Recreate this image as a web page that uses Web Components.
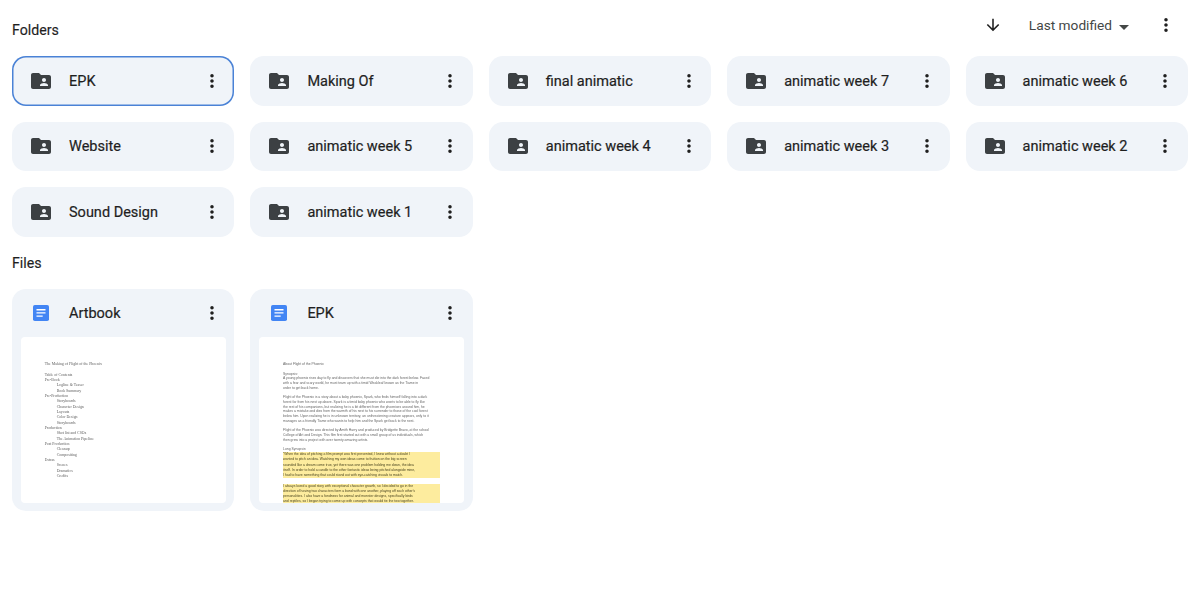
<!DOCTYPE html>
<html>
<head>
<meta charset="utf-8">
<title>Drive folder</title>
<style>
  html, body { margin: 0; background: #fff; }
  body { font-family: Roboto, "Liberation Sans", sans-serif; }
</style>
</head>
<body>
<drive-page>
  <drive-head slot="head"></drive-head>
  <drive-grid slot="folders">
    <folder-card selected>EPK</folder-card>
    <folder-card>Making Of</folder-card>
    <folder-card>final animatic</folder-card>
    <folder-card>animatic week 7</folder-card>
    <folder-card>animatic week 6</folder-card>
    <folder-card>Website</folder-card>
    <folder-card>animatic week 5</folder-card>
    <folder-card>animatic week 4</folder-card>
    <folder-card>animatic week 3</folder-card>
    <folder-card>animatic week 2</folder-card>
    <folder-card>Sound Design</folder-card>
    <folder-card>animatic week 1</folder-card>
  </drive-grid>
  <drive-grid slot="files">
    <file-card name="Artbook"><artbook-preview></artbook-preview></file-card>
    <file-card name="EPK"><epk-preview></epk-preview></file-card>
  </drive-grid>
</drive-page>

<script>
"use strict";

var KEBAB = `<svg width="24" height="24" viewBox="0 0 24 24" fill="#1f1f1f"><path d="M12 8c1.1 0 2-.9 2-2s-.9-2-2-2-2 .9-2 2 .9 2 2 2zm0 2c-1.1 0-2 .9-2 2s.9 2 2 2 2-.9 2-2-.9-2-2-2zm0 6c-1.1 0-2 .9-2 2s.9 2 2 2 2-.9 2-2-.9-2-2-2z" transform="translate(12 12) scale(.86) translate(-12 -12)"/></svg>`;

//Roboto 500 reads too heavy next to the reference, so 400 with a hair of stroke
var CARD_TEXT = `font-size : 14.5px; font-weight : 400; -webkit-text-stroke : .2px #1f1f1f; color : #1f1f1f;`;

class DrivePage extends HTMLElement{
    constructor(){
        super();
        this.attachShadow({ mode : "open" });
        this.shadowRoot.innerHTML = `
            <style>
                :host{ display : block; padding : 0 12px; width : 1176px; height : 598px; color : #1f1f1f; }
                #filesLabel{ font-size : 14.2px; font-weight : 400; -webkit-text-stroke : .15px #1f1f1f; line-height : 20px; padding : 16px 0 16px; }
            </style>
            <slot name="head"></slot>
            <slot name="folders"></slot>
            <div id="filesLabel">Files</div>
            <slot name="files"></slot>
        `;
    }
}

class DriveHead extends HTMLElement{
    constructor(){
        super();
        this.attachShadow({ mode : "open" });
        this.shadowRoot.innerHTML = `
            <style>
                :host{ display : flex; height : 56px; justify-content : space-between; color : #1f1f1f; }
                #label{ font-size : 14.2px; font-weight : 400; -webkit-text-stroke : .15px #1f1f1f; line-height : 20px; padding-top : 20px; }
                #sort{ display : flex; align-items : center; height : 24px; padding-top : 13px; }
                #sort svg{ display : block; }
                #name{ font-size : 13.7px; color : #444746; margin-left : 24px; }
                #caret{ margin-left : 0; }
                #more{ margin-left : 18px; margin-right : 10px; }
            </style>
            <div id="label">Folders</div>
            <div id="sort">
                <svg width="24" height="24" viewBox="0 0 24 24" fill="#1f1f1f"><path d="M20 12l-1.41-1.41L13 16.17V4h-2v12.17l-5.58-5.59L4 12l8 8 8-8z" transform="translate(12 12) scale(.78) translate(-12 -12)"/></svg>
                <span id="name">Last modified</span>
                <svg id="caret" width="24" height="24" viewBox="0 0 24 24" fill="#444746"><path d="M7 10l5 5 5-5z" transform="translate(0 2)"/></svg>
                <span id="more">${KEBAB}</span>
            </div>
        `;
    }
}

class DriveGrid extends HTMLElement{
    constructor(){
        super();
        this.attachShadow({ mode : "open" });
        this.shadowRoot.innerHTML = `
            <style>
                :host{ display : grid; grid-template-columns : repeat(5, 1fr); gap : 16px; }
            </style>
            <slot></slot>
        `;
    }
}

class FolderCard extends HTMLElement{
    constructor(){
        super();
        this.attachShadow({ mode : "open" });
        this.shadowRoot.innerHTML = `
            <style>
                :host{ display : flex; align-items : center; box-sizing : border-box; height : 49.67px; background : #f0f4f9; border-radius : 14px; padding : 0 10.6px 0 17px; ${CARD_TEXT} }
                :host([selected]){ box-shadow : inset 0 0 0 1.5px #4a82d6; background : #f0f4f9; }
                svg{ display : block; flex : none; }
                #name{ flex : 1; margin-left : 16px; padding-top : 1px; white-space : nowrap; }
                #more{ flex : none; height : 24px; }
            </style>
            <svg width="24" height="24" viewBox="0 0 24 24" fill="#3c4043"><path d="M20 6h-8l-2-2H4c-1.1 0-1.99.9-1.99 2L2 18c0 1.1.9 2 2 2h16c1.1 0 2-.9 2-2V8c0-1.1-.9-2-2-2zm-5 3c1.1 0 2 .9 2 2s-.9 2-2 2-2-.9-2-2 .9-2 2-2zm4 8h-8v-1c0-1.33 2.67-2 4-2s4 .67 4 2v1z"/></svg>
            <div id="name"><slot></slot></div>
            <div id="more">${KEBAB}</div>
        `;
    }
}

class FileCard extends HTMLElement{
    constructor(){
        super();
        this.attachShadow({ mode : "open" });
        this.shadowRoot.innerHTML = `
            <style>
                :host{ display : block; box-sizing : border-box; height : 222px; background : #f0f4f9; border-radius : 14px; padding : 0 8.7px 8px; }
                #top{ display : flex; align-items : center; height : 48px; padding : 0 2px 0 8.3px; ${CARD_TEXT} }
                #top > svg{ display : block; flex : none; margin-left : 4px; }
                #name{ flex : 1; margin-left : 20px; padding-top : 2px; }
                #more{ flex : none; height : 24px; }
                #preview{ height : 166px; background : #fff; border-radius : 4px; overflow : hidden; }
                #sheet{ height : 166px; filter : blur(.55px); }
            </style>
            <div id="top">
                <svg width="16" height="16" viewBox="0 0 16 16"><rect width="16" height="16" rx="1.8" fill="#4285f4"/><path d="M3.5 4h9v1.4h-9zM3.5 7.2h9v1.4h-9zM3.5 10.4h6.2v1.4H3.5z" fill="#fff"/></svg>
                <div id="name"></div>
                <div id="more">${KEBAB}</div>
            </div>
            <div id="preview"><div id="sheet"><slot></slot></div></div>
        `;
        this.shadowRoot.getElementById("name").textContent = this.getAttribute("name");
    }
}

class ArtbookPreview extends HTMLElement{
    constructor(){
        super();
        this.attachShadow({ mode : "open" });
        var lines = [
            [0, "The Making of Flight of the Phoenix"], [0, ""],
            [0, "Table of Contents"], [0, "Pre-Book"], [1, "Logline & Teaser"], [1, "Book Summary"],
            [0, "Pre-Production"], [1, "Storyboards"], [1, "Character Design"], [1, "Layouts"],
            [1, "Color Design"], [1, "Storyboards"], [0, "Production"], [1, "Shot list and CSOs"],
            [1, "The Animation Pipeline"], [0, "Post Production"], [1, "Cleanup"], [1, "Compositing"],
            [0, "Extras"], [1, "Scenes"], [1, "Dramatics"], [1, "Credits"]
        ];
        var html = lines.map(l => `<div class="${l[0] ? "in" : ""}">${l[1].replace("&", "&amp;") || "&nbsp;"}</div>`).join("");
        this.shadowRoot.innerHTML = `
            <style>
                :host{ display : block; padding : 25px 0 0 24px; font : 3.9px/5.33px "Liberation Serif", serif; color : #5f5f5f; }
                .in{ padding-left : 12px; }
            </style>
            ${html}
        `;
    }
}

class EpkPreview extends HTMLElement{
    constructor(){
        super();
        this.attachShadow({ mode : "open" });
        var plain = (arr) => arr.map(t => `<div class="ln">${t}</div>`).join("");
        var marked = (arr) => arr.map(t => `<div class="hl">${t}</div>`).join("");
        this.shadowRoot.innerHTML = `
            <style>
                :host{ display : block; padding : 25.5px 0 0 24px; width : 160px; font : 3.4px/4.8px "Liberation Sans", sans-serif; color : #666; white-space : nowrap; }
                .ln{ height : 4.8px; }
                .gap{ height : 4.3px; }
                #long{ height : 5.4px; }
                .hl{ height : 5.2px; line-height : 5.2px; background : #fdec9e; color : #4a4520; width : 157px; overflow : hidden; }
                .hlgap{ height : 5.6px; }
            </style>
            ${plain(["About Flight of the Phoenix"])}
            <div class="gap"></div>
            ${plain([
                "Synopsis:",
                "A young phoenix rises day to fly and discovers that she must die into the dark forest below. Faced",
                "with a fear and scary world, he must team up with a timid Weakleaf known as the Tiame in",
                "order to get back home."
            ])}
            <div class="gap"></div>
            ${plain([
                "Flight of the Phoenix is a story about a baby phoenix, Spark, who finds himself falling into a dark",
                "forest far from his nest up above. Spark is a timid baby phoenix who wants to be able to fly like",
                "the rest of his companions, but realizing he is a bit different from the phoenixes around him, he",
                "makes a mistake and dies from the warmth of his nest to his surrender to those of the cool forest",
                "below him. Upon realizing he is in unknown territory, an unthreatening creature appears, only to it",
                "manages as a friendly Tiame who wants to help him and the Spark get back to the nest."
            ])}
            <div class="gap"></div>
            ${plain([
                "Flight of the Phoenix was directed by Amith Harry and produced by Bridgette Bravo, at the school",
                "College of Art and Design. This film first started out with a small group of us individuals, which",
                "then grew into a project with over twenty amazing artists."
            ])}
            <div class="gap"></div>
            <div id="long" class="ln">Long Synopsis:</div>
            ${marked([
                "\u201CWhen the idea of pitching a film prompt was first presented, I knew without a doubt I",
                "wanted to pitch an idea. Watching my own ideas come to fruition on the big screen",
                "sounded like a dream come true, yet there was one problem holding me down, the idea",
                "itself. In order to hold a candle to the other fantastic ideas being pitched alongside mine,",
                "I had to have something that could stand out with eye-catching visuals to match."
            ])}
            <div class="hlgap"></div>
            ${marked([
                "I always loved a good story with exceptional character growth, so I decided to go in the",
                "direction of having two characters form a bond with one another, playing off each other's",
                "personalities. I also have a fondness for animal and monster designs, specifically birds",
                "and reptiles, so I began trying to come up with concepts that would tie the two together."
            ])}
        `;
    }
}

customElements.define("drive-page", DrivePage);
customElements.define("drive-head", DriveHead);
customElements.define("drive-grid", DriveGrid);
customElements.define("folder-card", FolderCard);
customElements.define("file-card", FileCard);
customElements.define("artbook-preview", ArtbookPreview);
customElements.define("epk-preview", EpkPreview);
</script>
</body>
</html>
